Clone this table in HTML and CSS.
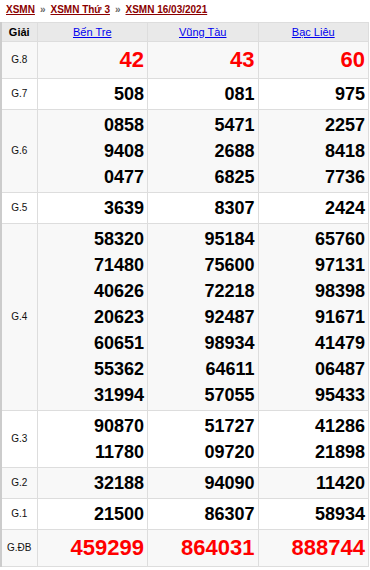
FILE: index.html
```html
<!DOCTYPE html>
<html lang="vi">
<head>
<meta charset="utf-8">
<link rel="stylesheet" href="styles.css">
</head>
<body>
<div class="crumbs">
  <a href="#">XSMN</a><span class="sep">»</span><a href="#">XSMN Thứ 3</a><span class="sep">»</span><a href="#">XSMN 16/03/2021</a>
</div>
<table class="kq">
  <colgroup><col class="c0"><col><col><col></colgroup>
  <thead>
    <tr><th class="lbl-h">Giải</th><th><a href="#">Bến Tre</a></th><th><a href="#">Vũng Tàu</a></th><th><a href="#">Bạc Liêu</a></th></tr>
  </thead>
  <tbody>
    <tr class="alt big"><td class="lbl">G.8</td><td class="red">42</td><td class="red">43</td><td class="red">60</td></tr>
    <tr><td class="lbl">G.7</td><td>508</td><td>081</td><td>975</td></tr>
    <tr class="alt"><td class="lbl">G.6</td><td><div>0858</div><div>9408</div><div>0477</div></td><td><div>5471</div><div>2688</div><div>6825</div></td><td><div>2257</div><div>8418</div><div>7736</div></td></tr>
    <tr><td class="lbl">G.5</td><td>3639</td><td>8307</td><td>2424</td></tr>
    <tr class="alt"><td class="lbl">G.4</td>
      <td><div>58320</div><div>71480</div><div>40626</div><div>20623</div><div>60651</div><div>55362</div><div>31994</div></td>
      <td><div>95184</div><div>75600</div><div>72218</div><div>92487</div><div>98934</div><div>64611</div><div>57055</div></td>
      <td><div>65760</div><div>97131</div><div>98398</div><div>91671</div><div>41479</div><div>06487</div><div>95433</div></td></tr>
    <tr><td class="lbl">G.3</td><td><div>90870</div><div>11780</div></td><td><div>51727</div><div>09720</div></td><td><div>41286</div><div>21898</div></td></tr>
    <tr class="alt"><td class="lbl">G.2</td><td>32188</td><td>94090</td><td>11420</td></tr>
    <tr><td class="lbl">G.1</td><td>21500</td><td>86307</td><td>58934</td></tr>
    <tr class="alt big"><td class="lbl">G.ĐB</td><td class="red">459299</td><td class="red">864031</td><td class="red">888744</td></tr>
  </tbody>
</table>
</body>
</html>
```

FILE: styles.css
```css
html, body {
  margin: 0;
  padding: 0;
  background: #fff;
  font-family: "Liberation Sans", Arial, sans-serif;
}
.crumbs {
  height: 22px;
  box-sizing: border-box;
  padding: 3px 0 0 6px;
  font-size: 10px;
  line-height: 14px;
  font-weight: bold;
}
.crumbs a {
  color: #8b0000;
  text-decoration: underline;
}
.crumbs .sep {
  color: #666;
  margin: 0 5px;
  font-weight: bold;
}
.kq {
  border-collapse: collapse;
  table-layout: fixed;
  width: 369px;
  border-left: 2px solid #ccc;
}
.kq col.c0 { width: 36px; }
.kq th, .kq td {
  border: 1px solid #ddd;
}
.kq thead th {
  background: #e9e9e9;
  font-size: 11px;
  font-weight: normal;
  line-height: 14px;
  padding: 2px 0;
  text-align: center;
  height: 14px;
}
.kq thead th a {
  color: #0000ee;
  text-decoration: underline;
}
.kq thead th.lbl-h {
  color: #000;
  font-weight: bold;
}
.kq td {
  font-size: 18px;
  font-weight: bold;
  line-height: 26px;
  padding: 2px 3px 2px 0;
  text-align: right;
  color: #000;
  vertical-align: middle;
}
.kq tr.alt td { background: #f8f8f8; }
.kq td.lbl {
  font-size: 10px;
  font-weight: normal;
  text-align: center;
  padding: 0;
  color: #111;
}
.kq tr.big td { line-height: 32px; }
.kq tr.big td.red { font-size: 22px; }
.kq td.red { color: #f00; }
```
